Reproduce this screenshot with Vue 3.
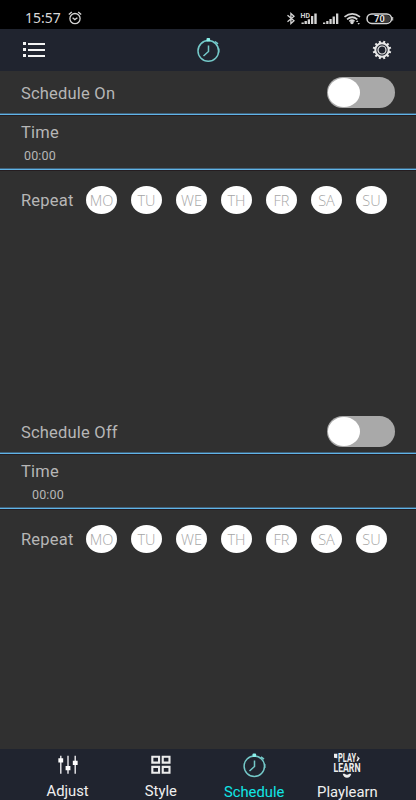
<script setup>
import { ref } from "vue";

const DAYS = ["MO", "TU", "WE", "TH", "FR", "SA", "SU"];

const schedules = ref([
  { id: "on", title: "Schedule On", time: "00:00", enabled: false },
  { id: "off", title: "Schedule Off", time: "00:00", enabled: false },
]);

const tabs = [
  { id: "adjust", label: "Adjust" },
  { id: "style", label: "Style" },
  { id: "schedule", label: "Schedule" },
  { id: "playlearn", label: "Playlearn" },
];
const activeTab = ref("schedule");

const teeth = Array.from({ length: 12 }, (_, i) => i * 30 + 15);
</script>

<template>
  <div class="screen">
    <div class="status">
      <span class="clock">15:57</span>
      <svg class="alarm" width="14" height="14" viewBox="0 0 14 14">
        <g fill="none" stroke="#d4d4d4" stroke-width="1.3">
          <circle cx="7" cy="7.6" r="5.1" />
          <path d="M.8 3.6 3.8 1M13.2 3.6 10.2 1M4.6 6.8 6.8 8.6 9.4 6.8" />
        </g>
      </svg>
      <svg class="indicators" width="110" height="16" viewBox="0 0 110 16">
        <path
          d="M2.500 5.300 9 10.700 5.900 13.500V3.500L9 6.300 2.500 11.700"
          fill="none"
          stroke="#d4d4d4"
          stroke-width="1.3"
        />
        <text class="hd" x="15.500" y="7.500" textLength="9.500" lengthAdjust="spacingAndGlyphs">HD</text>
        <g fill="#d4d4d4">
          <path d="M16.500 12.500h2.300V14h-2.300zM19.500 11h2.400v3h-2.400zM22.700 9.300H25V14h-2.300zM26 6h2.300v8H26zM29.300 3.500h2.400V14h-2.400z" />
          <path d="M38 12.500h2.300V14H38zM41.200 11h2.300v3h-2.300zM44.400 9h2.300v5h-2.300zM47.600 6.500h2.300V14h-2.300zM51 3.500h2.300V14H51z" />
          <circle cx="67" cy="12.500" r="1.700" />
          <path d="M71 12l1.200-1.800 1.200 1.800zM72.500 13h2.400l-1.200 1.800z" />
        </g>
        <g fill="none" stroke="#d4d4d4" stroke-width="1.700">
          <path d="M59.500 6.800Q67.300 .8 75 6.800M62 9.300Q67.200 5.200 72.300 9.300M64.300 11.300Q67 9.200 69.500 11.300" />
          <rect x="82" y="3.900" width="24.500" height="9.600" rx="4.800" stroke-width="1.500" />
        </g>
        <path d="M98 5h3.500a3.700 3.700 0 0 1 0 7.400H98z" fill="#3c3c3c" />
        <path d="M107.700 7v3.500" stroke="#d4d4d4" />
        <text class="level" x="94.500" y="12" text-anchor="middle">70</text>
      </svg>
    </div>

    <header class="header">
      <svg width="24" height="18" viewBox="0 0 24 18">
        <path
          d="M1 1h3v3H1zM1 7h3v3H1zM1 13h3v3H1zM6 2h17v2H6zM6 8h17v2H6zM6 14h17v2H6z"
          fill="#f4f4f4"
        />
      </svg>
      <svg width="28" height="26" viewBox="0 0 28 26">
        <g fill="none" stroke="#74c9c9" stroke-width="1.500">
          <circle cx="13.300" cy="13.900" r="10.300" />
          <path d="M13.500 8.500v6l-5 4.500M20 4.500l3 2.300M23.700 11.500v4" />
        </g>
        <rect x="11.500" y="1" width="3.600" height="3.500" rx="1" fill="#8af0ea" />
      </svg>
      <svg width="20" height="20" viewBox="0 0 20 20">
        <g fill="none" stroke="#e8e8e8">
          <circle cx="10" cy="10" r="6.700" stroke-width="2" />
          <circle cx="10" cy="10" r="4" stroke-width="1.200" />
          <path
            v-for="angle in teeth"
            :key="angle"
            d="M10 .7v2.500"
            stroke-width="2"
            :transform="`rotate(${angle} 10 10)`"
          />
        </g>
      </svg>
    </header>

    <main class="content">
      <section
        v-for="item in schedules"
        :key="item.id"
        class="schedule"
        :class="item.id"
      >
        <div class="title-row">
          <span class="label title">{{ item.title }}</span>
          <button
            class="switch"
            :class="{ checked: item.enabled }"
            :aria-label="item.title"
            @click="item.enabled = !item.enabled"
          >
            <span class="knob"></span>
          </button>
        </div>
        <div class="time-row">
          <span class="label">Time</span>
          <span class="time">{{ item.time }}</span>
        </div>
        <div class="repeat-row">
          <span class="label repeat">Repeat</span>
          <div class="days">
            <span v-for="day in DAYS" :key="day" class="day">{{ day }}</span>
          </div>
        </div>
      </section>
    </main>

    <nav class="tabs">
      <div
        v-for="tab in tabs"
        :key="tab.id"
        class="tab"
        :class="[tab.id, { active: tab.id === activeTab }]"
        @click="activeTab = tab.id"
      >
        <svg v-if="tab.id === 'adjust'" width="28" height="28" viewBox="0 0 28 28">
          <path
            d="M6.500 5v18.500M14 5v18.500M21.500 5v18.500"
            stroke="#d8d8dc"
            stroke-width="1.600"
          />
          <path
            d="M4 7.500h5V12H4zM11.500 15.500h5V20h-5zM19 10h5v4.500h-5z"
            fill="#fff"
          />
        </svg>
        <svg v-else-if="tab.id === 'style'" width="28" height="28" viewBox="0 0 28 28">
          <path
            d="M5 6h7v6H5zM15.800 6h7v6h-7zM5 16.500h7v6H5zM15.800 16.500h7v6h-7z"
            fill="none"
            stroke="#ececec"
            stroke-width="2.200"
          />
        </svg>
        <svg v-else-if="tab.id === 'schedule'" width="28" height="28" viewBox="0 0 28 28">
          <g fill="none" stroke="#74c9c9" stroke-width="1.500">
            <circle cx="14.300" cy="15.200" r="10.200" />
            <path d="M14.500 9.500v6l-5 4.500M21 5.800l3 2.300M24.700 13v4" />
          </g>
          <rect x="12.500" y="2.500" width="3.600" height="3.500" rx="1" fill="#8af0ea" />
        </svg>
        <svg v-else class="logo" width="28" height="28" viewBox="0 0 28 28">
          <text x="5" y="11.300" textLength="18" lengthAdjust="spacingAndGlyphs">PLAY</text>
          <text x="0.500" y="21" textLength="27" lengthAdjust="spacingAndGlyphs">LEARN</text>
          <path d="M1 2.800h3.300v4.500L1 6.800zM24 5l2.800 2.300-2 3h-1.500l1.300-2.800z" />
          <path d="M9.700 22.800h2q2.300 2 4.600 0h2q-1 4-4.300 4t-4.300-4z" />
        </svg>
        <span class="tab-label">{{ tab.label }}</span>
      </div>
    </nav>
  </div>
</template>

<style>
body {
  background: #303030;
}
</style>

<style scoped>
.screen {
  display: flex;
  flex-direction: column;
  width: 416px;
  height: 800px;
  overflow: hidden;
  background: #303030;
  color: #b6b6b6;
  font-family: Roboto, sans-serif;
}

.status {
  display: flex;
  align-items: center;
  box-sizing: border-box;
  height: 29px;
  padding: 6px 21px 0 25px;
  background: #000;
}

.clock {
  width: 43px;
  color: #d8d8d8;
  font-family: "Noto Sans", sans-serif;
  font-size: 14px;
  line-height: 20px;
}

.indicators {
  margin-left: auto;
}

.hd {
  fill: #d4d4d4;
  font-size: 6.5px;
  font-weight: 700;
}

.level {
  fill: #e4e4e4;
  font-size: 9px;
  font-weight: 700;
}

.header {
  display: flex;
  align-items: center;
  justify-content: space-between;
  box-sizing: border-box;
  height: 42px;
  padding: 0 24px 0 22px;
  background: #20242f;
}

.content {
  flex: 1;
}

.schedule {
  height: 339px;
}

.label {
  font-size: 16.5px;
  line-height: 20px;
  letter-spacing: 0.2px;
}

.title-row {
  display: flex;
  align-items: center;
  justify-content: space-between;
  box-sizing: border-box;
  height: 44px;
  padding: 0 21px 0 21px;
  border-bottom: 1px solid #60b4e6;
  box-shadow: inset 0 -1px #40617a, 0 1px #251d20;
}

.title {
  margin-top: 2px;
}

.switch {
  display: flex;
  width: 68px;
  height: 31px;
  margin-bottom: 1px;
  padding: 0;
  border: 0;
  border-radius: 16px;
  background: #a9a9a9;
}

.switch.checked {
  justify-content: flex-end;
}

.knob {
  width: 32px;
  height: 29px;
  margin: 1px;
  border-radius: 50%;
  background: #fff;
}

.time-row {
  display: flex;
  flex-direction: column;
  box-sizing: border-box;
  height: 55px;
  padding: 8px 21px 0;
  border-bottom: 1px solid #60b4e6;
  box-shadow: inset 0 -1px #40617a, 0 1px #251d20;
}

.time {
  margin: 5px 0 0 3px;
  font-size: 12.5px;
  line-height: 16px;
  letter-spacing: 0.15px;
}

.off .time {
  margin-left: 11px;
}

.repeat-row {
  display: flex;
  align-items: center;
  height: 28px;
  padding: 16px 29px 0 21px;
}

.repeat {
  width: 65px;
  margin-top: 2px;
}

.days {
  display: flex;
  flex: 1;
  justify-content: space-between;
}

.day {
  width: 31px;
  height: 28px;
  border-radius: 50%;
  background: #fff;
  color: #a6a6a6;
  font-family: "Open Sans", sans-serif;
  font-size: 14.5px;
  font-weight: 300;
  line-height: 29px;
  text-align: center;
}

.tabs {
  display: flex;
  box-sizing: border-box;
  height: 51px;
  padding: 0 22px 0 21px;
  background: #20242f;
}

.tab {
  display: flex;
  flex: 1;
  flex-direction: column;
  align-items: center;
  padding-top: 2px;
}

.tab-label {
  margin-top: 4px;
  color: #f0f0f0;
  font-size: 14.8px;
  line-height: 18px;
  white-space: nowrap;
}

.active .tab-label {
  color: #10e6e6;
}

.logo {
  overflow: visible;
  fill: #eee;
  font-size: 12px;
  font-weight: 700;
}
</style>
